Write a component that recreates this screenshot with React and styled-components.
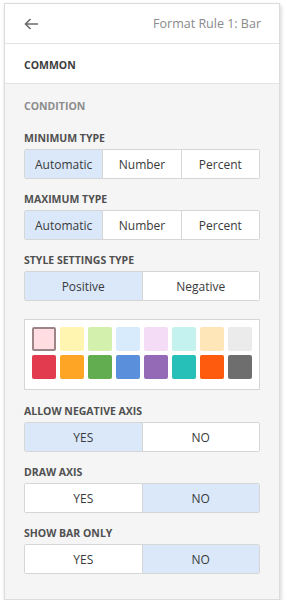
import styled, { createGlobalStyle } from "styled-components";

const GlobalStyle = createGlobalStyle`
  body {
    margin: 0;
    background: #ffffff;
    font-family: "Open Sans", "Noto Sans", sans-serif;
  }
`;

const Panel = styled.div`
  box-sizing: border-box;
  width: 276px;
  height: 597px;
  margin: 3px 0 0 4px;
  background: #f5f5f5;
  border: 1px solid #dcdcdc;
  box-shadow: 1px 2px 4px rgba(0, 0, 0, 0.18);
  display: flex;
  flex-direction: column;
`;

const Header = styled.div`
  height: 39px;
  background: #ffffff;
  border-bottom: 1px solid #e3e3e3;
  display: flex;
  align-items: center;
  justify-content: space-between;
  padding: 0 18px 0 19px;
`;

const BackButton = styled.div`
  display: flex;
  align-items: center;
  color: #6b6b6b;
`;

const Title = styled.div`
  font-size: 12.5px;
  color: #8a8a8a;
`;

const GroupHeader = styled.div`
  box-sizing: border-box;
  height: ${(p) => (p.$muted ? "40px" : "40px")};
  display: flex;
  align-items: center;
  padding: 3px 0 0 19px;
  font-size: 10.5px;
  font-weight: 700;
  color: ${(p) => (p.$muted ? "#8c8c8c" : "#3c3c3c")};
  background: ${(p) => (p.$muted ? "transparent" : "#ffffff")};
  border-bottom: ${(p) => (p.$muted ? "none" : "1px solid #e3e3e3")};
`;

const Body = styled.div`
  padding: 5px 19px 0;
  display: flex;
  flex-direction: column;
`;

const Field = styled.div`
  display: flex;
  flex-direction: column;
  margin-bottom: ${(p) => (p.$tight ? "0" : "11px")};
`;

const Label = styled.div`
  height: 15px;
  padding-top: 1px;
  line-height: 16px;
  font-size: 10.5px;
  font-weight: 700;
  color: #505050;
  margin-bottom: 4px;
`;

const Segmented = styled.div`
  display: flex;
  height: 30px;
  box-sizing: border-box;
  border: 1px solid #d6d6d6;
  border-radius: 2px;
  background: #ffffff;
  overflow: hidden;
`;

const Segment = styled.div`
  flex: 1;
  display: flex;
  align-items: center;
  justify-content: center;
  font-size: 12px;
  color: #3a3a3a;
  background: ${(p) => (p.$active ? "#dae8fa" : "#ffffff")};
  & + & {
    border-left: 1px solid #d6d6d6;
  }
`;

const Palette = styled.div`
  box-sizing: border-box;
  height: 71px;
  margin: 18px 0 12px;
  padding: 7px 7px;
  background: #ffffff;
  border: 1px solid #d6d6d6;
  display: grid;
  grid-template-columns: repeat(8, 24px);
  grid-auto-rows: 24px;
  gap: 4px;
`;

const Swatch = styled.div`
  box-sizing: border-box;
  border-radius: 2px;
  background: ${(p) => p.$color};
  border: ${(p) => (p.$selected ? "2px solid #9b8587" : "none")};
`;

const palette = [
  "#ffdde1", "#fff5b0", "#d3f0ad", "#d7ebfd", "#f4dcf6", "#c3f2ef", "#ffe6b8", "#ebebeb",
  "#e23a4e", "#ffa526", "#63ad51", "#5a8fdb", "#9469b6", "#26c0b8", "#ff5b0e", "#6e6e6e",
];

function Choice({ label, options, active, tight }) {
  return (
    <Field $tight={tight}>
      <Label>{label}</Label>
      <Segmented>
        {options.map((o, i) => (
          <Segment key={o} $active={i === active}>
            {o}
          </Segment>
        ))}
      </Segmented>
    </Field>
  );
}

function App() {
  const types = ["Automatic", "Number", "Percent"];
  const yesNo = ["YES", "NO"];

  return (
    <>
      <GlobalStyle />
      <Panel>
        <Header>
          <BackButton>
            <svg width="15" height="12" viewBox="0 0 15 12" fill="none">
              <path d="M14 6H1.5M6.5 1L1.5 6l5 5" stroke="currentColor" strokeWidth="1.6" />
            </svg>
          </BackButton>
          <Title>Format Rule 1: Bar</Title>
        </Header>
        <GroupHeader>COMMON</GroupHeader>
        <GroupHeader $muted>CONDITION</GroupHeader>
        <Body>
          <Choice label="MINIMUM TYPE" options={types} active={0} />
          <Choice label="MAXIMUM TYPE" options={types} active={0} />
          <Choice label="STYLE SETTINGS TYPE" options={["Positive", "Negative"]} active={0} tight />
          <Palette>
            {palette.map((c, i) => (
              <Swatch key={c} $color={c} $selected={i === 0} />
            ))}
          </Palette>
          <Choice label="ALLOW NEGATIVE AXIS" options={yesNo} active={0} />
          <Choice label="DRAW AXIS" options={yesNo} active={1} />
          <Choice label="SHOW BAR ONLY" options={yesNo} active={1} />
        </Body>
      </Panel>
    </>
  );
}

export default App;
